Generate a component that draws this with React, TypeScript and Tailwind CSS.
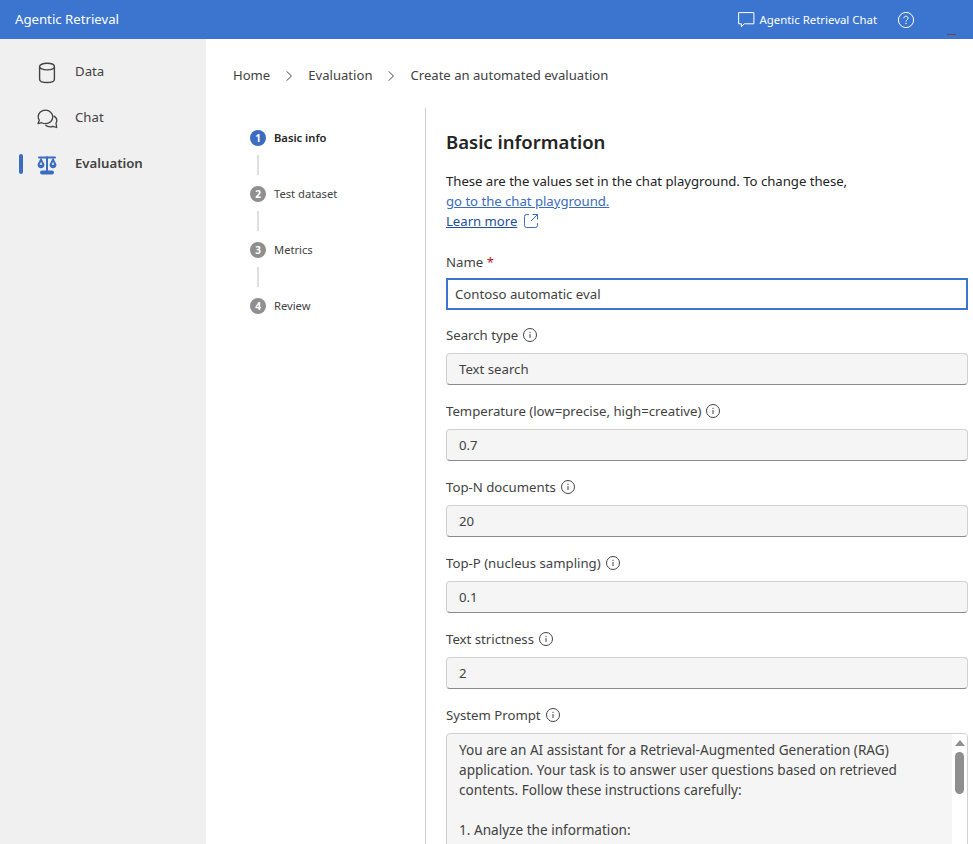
import React from 'react';

const font = "font-['Noto_Sans','Open_Sans',sans-serif]";

const steps = ['Basic info', 'Test dataset', 'Metrics', 'Review'];

const fields = [
  { label: 'Search type', value: 'Text search' },
  { label: 'Temperature (low=precise, high=creative)', value: '0.7' },
  { label: 'Top-N documents', value: '20' },
  { label: 'Top-P (nucleus sampling)', value: '0.1' },
  { label: 'Text strictness', value: '2' },
];

const InfoIcon = () => (
  <svg width="16" height="16" viewBox="0 0 16 16" fill="none" className="shrink-0">
    <circle cx="8" cy="8" r="6.5" stroke="#424242" />
    <rect x="7.5" y="7" width="1" height="4" fill="#424242" />
    <rect x="7.5" y="4.8" width="1" height="1.2" fill="#424242" />
  </svg>
);

const DataIcon = () => (
  <svg width="20" height="22" viewBox="0 0 20 22" fill="none">
    <path
      d="M2.600 4.600v12.600c0 1.900 3.200 3.300 7.400 3.300s7.400-1.400 7.400-3.300V4.600M2.600 4.600c0-1.900 3.200-3.300 7.400-3.300s7.400 1.400 7.400 3.300-3.200 3.300-7.400 3.300-7.400-1.400-7.400-3.300Z"
      stroke="#424242"
      strokeWidth="1.400"
    />
  </svg>
);

const ChatIcon = () => (
  <svg width="21" height="20" viewBox="0 0 21 20" fill="none">
    <path
      d="M8.500 1.200c-4 0-7.300 2.900-7.300 6.500 0 1.300.4 2.500 1.100 3.500L1 14.600l3.700-.9c1.100.6 2.400 1 3.800 1 4 0 7.300-3 7.300-6.900 0-3.600-3.300-6.600-7.300-6.600Z"
      stroke="#424242"
      strokeWidth="1.300"
      strokeLinejoin="round"
    />
    <path
      d="M16.600 6.800c1.900.9 3.200 2.600 3.200 4.600 0 1-.3 1.900-.8 2.700l.7 4.400-3.900-1.200c-.8.3-1.700.5-2.600.5-1.900 0-3.600-.7-4.800-1.800"
      stroke="#424242"
      strokeWidth="1.300"
      strokeLinejoin="round"
    />
  </svg>
);

const ScaleIcon = () => (
  <svg width="20" height="19" viewBox="0 0 20 19" fill="#3b6cc0">
    <rect x="1" y="0.500" width="18" height="2" rx="1" />
    <rect x="9" y="0.500" width="2" height="15" />
    <rect x="3" y="14.500" width="14" height="4" rx="2" />
    <path d="M4 1.500.5 8.500c0 2.300 1.500 3.800 3.500 3.800s3.500-1.500 3.500-3.800L4 1.500Zm0 4.200 1.300 3H2.700L4 5.700Z" fillRule="evenodd" />
    <path d="M16 1.500l-3.500 7c0 2.300 1.500 3.800 3.500 3.800s3.500-1.500 3.500-3.800L16 1.500Zm0 4.200 1.300 3h-2.600L16 5.700Z" fillRule="evenodd" />
  </svg>
);

const Chevron = () => (
  <svg width="16" height="16" viewBox="0 0 16 16" fill="none">
    <path d="M5.800 3.400 10.400 8l-4.600 4.600" stroke="#424242" strokeWidth="1" />
  </svg>
);

const NavItem = ({ icon, label, active }: { icon: React.ReactNode; label: string; active?: boolean }) => (
  <div className="flex h-[46px] items-center">
    <div className={`ml-[19px] h-5 w-1 rounded-full ${active ? 'bg-[#3b6cc0]' : 'bg-transparent'}`} />
    <div className="ml-[6px] mt-[2px] flex w-[38px] justify-center pr-[2px]">{icon}</div>
    <span className={`ml-[8px] text-[13.2px] text-[#424242] ${active ? 'font-semibold' : ''}`}>{label}</span>
  </div>
);

export default function App() {
  return (
    <div className={`${font} flex h-[844px] w-[973px] flex-col overflow-hidden bg-white text-[#242424]`}>
      <header className="relative flex h-[39px] shrink-0 items-center bg-[#3c75cf] pl-[15px] text-[13.2px] text-white">
        <span>Agentic Retrieval</span>
        <div className="ml-auto flex items-center">
          <svg width="17" height="16" viewBox="0 0 17 16" fill="none">
            <path d="M.6.6h15.300v11.200H6.300L3.400 14.700v-2.900H.6V.6Z" stroke="white" strokeWidth="1" />
          </svg>
          <span className="ml-[4px] text-[11.4px]">Agentic Retrieval Chat</span>
          <svg width="18" height="18" viewBox="0 0 18 18" fill="none" className="ml-[20px] mr-[58px]">
            <circle cx="9" cy="9" r="7.600" stroke="white" />
            <path d="M6.900 7.200c0-1.200 1-2 2.100-2s2.100.8 2.100 1.900c0 1.700-2.100 1.600-2.100 3.500" stroke="white" />
            <rect x="8.400" y="11.800" width="1.200" height="1.200" fill="white" />
          </svg>
        </div>
        <div className="absolute left-[947px] top-[34px] h-px w-[9px] bg-[#6b4a3a]" />
      </header>

      <div className="flex min-h-0 flex-1">
        <aside className="w-[206px] shrink-0 bg-[#f0f0f0] pt-[10px]">
          <NavItem icon={<DataIcon />} label="Data" />
          <NavItem icon={<ChatIcon />} label="Chat" />
          <NavItem icon={<ScaleIcon />} label="Evaluation" active />
        </aside>

        <main className="min-w-0 flex-1">
          <nav className="flex h-[69px] items-center gap-[11px] pl-[27px] pt-1 text-[13.1px] text-[#424242]">
            <span>Home</span>
            <Chevron />
            <span>Evaluation</span>
            <Chevron />
            <span>Create an automated evaluation</span>
          </nav>

          <div className="flex">
            <ol className="w-[220px] shrink-0 border-r border-[#d1d1d1] pl-[44px] pt-[22px]">
              {steps.map((step, i) => (
                <li key={step}>
                  <div className="flex h-4 items-center gap-2">
                    <span
                      className={`flex h-4 w-4 items-center justify-center rounded-full text-[10px] font-bold text-white ${
                        i === 0 ? 'bg-[#3b6cc0]' : 'bg-[#8f8f8f]'
                      }`}
                    >
                      {i + 1}
                    </span>
                    <span className={`text-[11.2px] ${i === 0 ? 'font-semibold' : 'text-[#424242]'}`}>{step}</span>
                  </div>
                  {i < steps.length - 1 && <div className="ml-[7px] mt-[9px] mb-[11px] h-5 w-[2px] bg-[#e0e0e0]" />}
                </li>
              ))}
              <div className="h-[600px]" />
            </ol>

            <section className="ml-[20px] w-[522px] shrink-0">
              <h2 className="mt-[19px] text-[18.500px] font-semibold leading-[30px]">Basic information</h2>
              <p className="mt-[14px] text-[13.2px] leading-[20px] tracking-[-0.04px]">
                These are the values set in the chat playground. To change these,
                <br />
                <a className="text-[#3b6cc0] underline">go to the chat playground.</a>
                <br />
                <a className="inline-flex items-center gap-[6px] text-[#1f4f9c]">
                  <span className="underline">Learn more</span>
                  <svg width="16" height="16" viewBox="0 0 16 16" fill="none">
                    <path
                      d="M6 1.500H3.500a2 2 0 0 0-2 2v9a2 2 0 0 0 2 2h9a2 2 0 0 0 2-2V10M9.500 1.500h5v5M14.500 1.500 8 8"
                      stroke="#3b6cc0"
                    />
                  </svg>
                </a>
              </p>

              <label className="mt-[21px] block text-[13.2px] leading-5 text-[#424242]">
                Name <span className="text-[#b10e1c]">*</span>
              </label>
              <div className="mt-[6px] flex h-8 items-center border-2 border-[#3c75cf] pl-[7px] pt-[2px] text-[13.2px] text-[#424242]">
                Contoso automatic eval
              </div>

              {fields.map((f, i) => (
                <div key={f.label} className={i === 0 ? 'mt-[15px]' : 'mt-[16px]'}>
                  <div className="flex h-5 items-center gap-1 text-[13.2px] text-[#424242]">
                    <span className="mt-[2px]">{f.label}</span>
                    <InfoIcon />
                  </div>
                  <div className="mt-[8px] flex h-8 items-center rounded border border-[#d1d1d1] border-b-[#8a8a8a] bg-[#f5f5f5] pl-3 pt-[2px] text-[13.2px] text-[#424242]">
                    {f.value}
                  </div>
                </div>
              ))}

              <div className="mt-[16px]">
                <div className="flex h-5 items-center gap-1 text-[13.2px] text-[#424242]">
                  <span className="mt-[2px]">System Prompt</span>
                  <InfoIcon />
                </div>
                <div className="mt-[8px] flex h-[180px] overflow-hidden rounded border border-[#d1d1d1] bg-[#f5f5f5]">
                  <div className="flex-1 pl-3 pr-4 pt-[6px] text-[13.6px] leading-[20px] text-[#424242]">
                    You are an AI assistant for a Retrieval-Augmented Generation (RAG)
                    <br />
                    application. Your task is to answer user questions based on retrieved
                    <br />
                    contents. Follow these instructions carefully:
                    <br />
                    <br />
                    1. Analyze the information:
                  </div>
                  <div className="flex w-[15px] shrink-0 flex-col items-center bg-white pt-[6px]">
                    <div className="h-0 w-0 border-x-[5px] border-b-[6px] border-x-transparent border-b-[#8f8f8f]" />
                    <div className="mt-[6px] h-[42px] w-[9px] rounded-full bg-[#8f8f8f]" />
                  </div>
                </div>
              </div>
            </section>
          </div>
        </main>
      </div>
    </div>
  );
}
